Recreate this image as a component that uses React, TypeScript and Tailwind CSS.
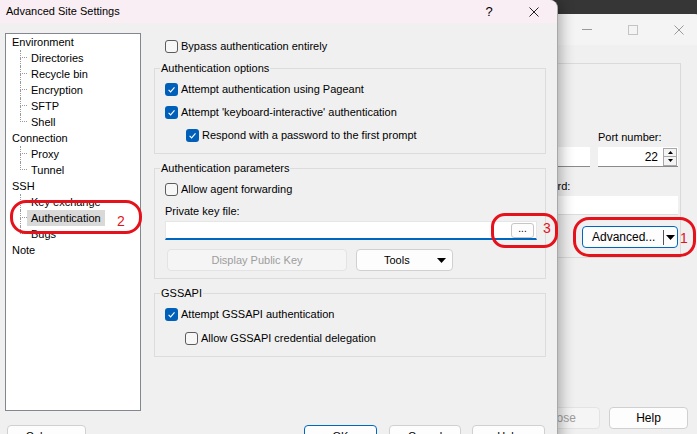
import React from 'react'

type Node = { label: string; child?: boolean; last?: boolean; selected?: boolean }

const tree: Node[] = [
  { label: 'Environment' },
  { label: 'Directories', child: true },
  { label: 'Recycle bin', child: true },
  { label: 'Encryption', child: true },
  { label: 'SFTP', child: true },
  { label: 'Shell', child: true, last: true },
  { label: 'Connection' },
  { label: 'Proxy', child: true },
  { label: 'Tunnel', child: true, last: true },
  { label: 'SSH' },
  { label: 'Key exchange', child: true },
  { label: 'Authentication', child: true, selected: true },
  { label: 'Bugs', child: true, last: true },
  { label: 'Note' },
]

function Check({ checked, label }: { checked?: boolean; label: string }) {
  return (
    <div className="flex h-[16px] items-center gap-[3px] leading-[16px]">
      {checked ? (
        <span className="flex h-[13px] w-[13px] shrink-0 items-center justify-center rounded-[3px] bg-[#005fb8]">
          <svg viewBox="0 0 13 13" className="h-[13px] w-[13px]" aria-hidden>
            <path d="M3.6 6.9l2 2 3.9-4.5" fill="none" stroke="#fff" strokeWidth="1.1" />
          </svg>
        </span>
      ) : (
        <span className="h-[13px] w-[13px] shrink-0 rounded-[3px] border border-[#5c5c5c] bg-[#f7f7f7]" />
      )}
      <span>{label}</span>
    </div>
  )
}

function Group({ title, children }: { title: string; children: React.ReactNode }) {
  return (
    <fieldset className="mt-[6px] border border-[#dcdcdc] pl-[5px]">
      <legend className="px-[1px] leading-[16px]">{title}</legend>
      {children}
    </fieldset>
  )
}

function Arrow() {
  return (
    <svg viewBox="0 0 9 5" className="h-[5px] w-[9px]" aria-hidden>
      <path d="M0 0h9L4.5 5z" fill="#000" />
    </svg>
  )
}

function Tree() {
  return (
    <div className="h-[378px] w-[136px] border border-[#828790] bg-white pl-[6px]">
      {tree.map((n) =>
        n.child ? (
          <div key={n.label} className="flex h-[16px]">
            <div className="ml-[8px] flex w-[7px] flex-col">
              <div className="h-[8px] border-b border-l border-dotted border-[#9a9a9a]" />
              <div className={n.last ? 'h-[8px]' : 'h-[8px] border-l border-dotted border-[#9a9a9a]'} />
            </div>
            <span className={n.selected ? 'bg-[#d9d9d9] px-[4px] leading-[16px]' : 'px-[4px] leading-[16px]'}>
              {n.label}
            </span>
          </div>
        ) : (
          <div key={n.label} className="h-[16px] leading-[16px]">
            {n.label}
          </div>
        ),
      )}
    </div>
  )
}

function Dialog() {
  return (
    <div className="absolute left-0 top-0 flex h-[460px] w-[558px] flex-col rounded-tr-[8px] border-r border-[#a8a8a8] bg-[#f0f0f0] shadow-[3px_0_14px_rgba(0,0,0,0.3)]">
      <div className="flex h-[23px] shrink-0 items-center rounded-tr-[8px] bg-[#f9eef3]">
        <span className="pl-[6px]">Advanced Site Settings</span>
        <span className="ml-auto w-[44px] text-center text-[13px]">?</span>
        <span className="flex w-[46px] justify-center">
          <svg viewBox="0 0 10 10" className="h-[10px] w-[10px]" aria-hidden>
            <path d="M0.5 0.5l9 9M9.5 0.5l-9 9" stroke="#222" strokeWidth="1" />
          </svg>
        </span>
      </div>

      <div className="flex gap-[13px] pl-[5px] pt-[10px]">
        <Tree />

        <div className="flex w-[392px] flex-col">
          <div className="mt-[5px] pl-[11px]">
            <Check label="Bypass authentication entirely" />
          </div>

          <Group title="Authentication options">
            <div className="flex flex-col gap-[7px] pb-[10px] pl-[5px] pt-[5px]">
              <Check checked label="Attempt authentication using Pageant" />
              <Check checked label="Attempt 'keyboard-interactive' authentication" />
              <div className="pl-[21px]">
                <Check checked label="Respond with a password to the first prompt" />
              </div>
            </div>
          </Group>

          <Group title="Authentication parameters">
            <div className="flex flex-col pb-[7px] pl-[5px] pr-[8px] pt-[5px]">
              <Check label="Allow agent forwarding" />
              <div className="mt-[6px] h-[16px] leading-[16px]">Private key file:</div>
              <div className="mt-[2px] flex h-[19px] items-center justify-end border border-b-2 border-[#e6e6e6] border-b-[#0067c0] bg-white pr-[2px]">
                <span className="flex h-[15px] w-[23px] items-center justify-center rounded-[3px] border border-[#c6c6c6] bg-[#fdfdfd] pb-[3px] text-[10px]">
                  ...
                </span>
              </div>
              <div className="mt-[9px] flex gap-[9px] pl-[2px]">
                <div className="flex h-[22px] w-[180px] items-center justify-center rounded-[4px] border border-[#e3e3e3] bg-[#f5f5f5] text-[#9d9d9d]">
                  Display Public Key
                </div>
                <div className="flex h-[22px] w-[97px] items-center justify-between rounded-[4px] border border-[#d0d0d0] bg-[#fdfdfd] pl-[27px] pr-[6px]">
                  <span>Tools</span>
                  <Arrow />
                </div>
              </div>
            </div>
          </Group>

          <Group title="GSSAPI">
            <div className="flex flex-col gap-[8px] pb-[10px] pl-[5px] pt-[5px]">
              <Check checked label="Attempt GSSAPI authentication" />
              <div className="pl-[20px]">
                <Check label="Allow GSSAPI credential delegation" />
              </div>
            </div>
          </Group>
        </div>
      </div>

      <div className="mt-[14px] flex pl-[7px] pr-[12px]">
        <div className="flex h-[23px] w-[79px] items-center justify-center gap-[6px] rounded-[4px] border border-[#d0d0d0] bg-[#fdfdfd]">
          <span>Color</span>
          <Arrow />
        </div>
        <div className="ml-auto flex h-[23px] w-[73px] items-center justify-center rounded-[4px] border border-[#0067c0] bg-[#fdfdfd]">
          OK
        </div>
        <div className="ml-[12px] flex h-[23px] w-[72px] items-center justify-center rounded-[4px] border border-[#d0d0d0] bg-[#fdfdfd]">
          Cancel
        </div>
        <div className="ml-[11px] flex h-[23px] w-[73px] items-center justify-center rounded-[4px] border border-[#d0d0d0] bg-[#fdfdfd]">
          Help
        </div>
      </div>
    </div>
  )
}

function LoginWindow() {
  return (
    <div className="absolute left-[380px] top-[14px] flex h-[440px] w-[322px] flex-col rounded-t-[8px] bg-[#f0f0f0]">
      <div className="flex h-[31px] shrink-0 justify-end rounded-t-[8px] bg-[#f4f4f4]">
        <span className="flex w-[46px] items-center justify-center">
          <span className="h-px w-[10px] bg-[#9a9a9a]" />
        </span>
        <span className="flex w-[46px] items-center justify-center">
          <span className="h-[10px] w-[10px] border border-[#c4c4c4]" />
        </span>
        <span className="flex w-[46px] items-center justify-center">
          <svg viewBox="0 0 10 10" className="h-[10px] w-[10px]" aria-hidden>
            <path d="M0.5 0.5l9 9M9.5 0.5l-9 9" stroke="#9a9a9a" strokeWidth="1" />
          </svg>
        </span>
      </div>

      <div className="ml-[20px] mr-[21px] mt-[18px] flex h-[195px] flex-col border border-[#dadada] pr-[2px] pt-[65px]">
        <div className="grid grid-cols-[1fr_80px] gap-x-[8px]">
          <div className="h-[16px]" />
          <div className="h-[16px] leading-[16px]">Port number:</div>
          <div className="mt-[2px] h-[20px] border-b border-[#8a8a8a] bg-white" />
          <div className="mt-[2px] flex h-[20px] items-center justify-end border-b border-[#8a8a8a] bg-white pr-[1px]">
            <span className="pr-[5px] text-[12px]">22</span>
            <span className="flex h-[18px] w-[14px] flex-col">
              <span className="flex h-[9px] items-center justify-center border border-[#a8a8a8] bg-[#f4f4f4]">
                <svg viewBox="0 0 5 3" className="h-[3px] w-[5px]" aria-hidden>
                  <path d="M0 3h5L2.5 0z" fill="#000" />
                </svg>
              </span>
              <span className="flex h-[9px] items-center justify-center border border-t-0 border-[#a8a8a8] bg-[#f4f4f4]">
                <svg viewBox="0 0 5 3" className="h-[3px] w-[5px]" aria-hidden>
                  <path d="M0 0h5L2.5 3z" fill="#000" />
                </svg>
              </span>
            </span>
          </div>
        </div>

        <div className="mt-[11px] grid grid-cols-[1fr_159px] gap-x-[8px]">
          <div className="h-[16px]" />
          <div className="h-[16px] leading-[16px]">Password:</div>
          <div className="mt-[2px] h-[19px] border-b border-[#dcdcdc] bg-white" />
          <div className="mt-[2px] h-[19px] border-b border-[#dcdcdc] bg-white" />
        </div>

        <div className="mt-[11px] flex justify-end">
          <div className="flex h-[22px] w-[96px] items-center rounded-[4px] border border-[#0067c0] bg-[#fdfdfd] pl-[9px] pr-[2px]">
            <span className="text-[12px]">Advanced...</span>
            <span className="ml-auto h-[15px] w-px bg-[#555]" />
            <span className="ml-[2px] flex w-[9px] justify-center">
              <Arrow />
            </span>
          </div>
        </div>
      </div>

      <div className="mt-[149px] flex justify-end gap-[9px] pr-[14px]">
        <div className="flex h-[22px] w-[79px] items-center justify-center rounded-[4px] border border-[#e3e3e3] bg-[#f5f5f5] text-[12px] text-[#9d9d9d]">
          Close
        </div>
        <div className="flex h-[22px] w-[79px] items-center justify-center rounded-[4px] border border-[#d0d0d0] bg-[#fdfdfd] text-[12px]">
          Help
        </div>
      </div>
    </div>
  )
}

function Marks() {
  return (
    <>
      <div className="absolute left-[10px] top-[200px] h-[34px] w-[132px] rounded-[16px] border-[3px] border-[#e5121c]" />
      <span className="absolute left-[117px] top-[212px] text-[14px] leading-[18px] text-[#e5121c]">2</span>
      <div className="absolute left-[491px] top-[213px] h-[35px] w-[67px] rounded-[14px] border-[3px] border-[#e5121c]" />
      <span className="absolute left-[543px] top-[219px] text-[14px] leading-[18px] text-[#e5121c]">3</span>
      <div className="absolute left-[573px] top-[217px] h-[40px] w-[123px] rounded-[16px] border-[3px] border-[#e5121c]" />
      <span className="absolute left-[680px] top-[229px] text-[14px] leading-[18px] text-[#e5121c]">1</span>
    </>
  )
}

export default function App() {
  return (
    <div className="relative h-[434px] w-[697px] overflow-hidden bg-[#363636] font-['Liberation_Sans',Arial,sans-serif] text-[11px] text-black">
      <LoginWindow />
      <Dialog />
      <Marks />
    </div>
  )
}
